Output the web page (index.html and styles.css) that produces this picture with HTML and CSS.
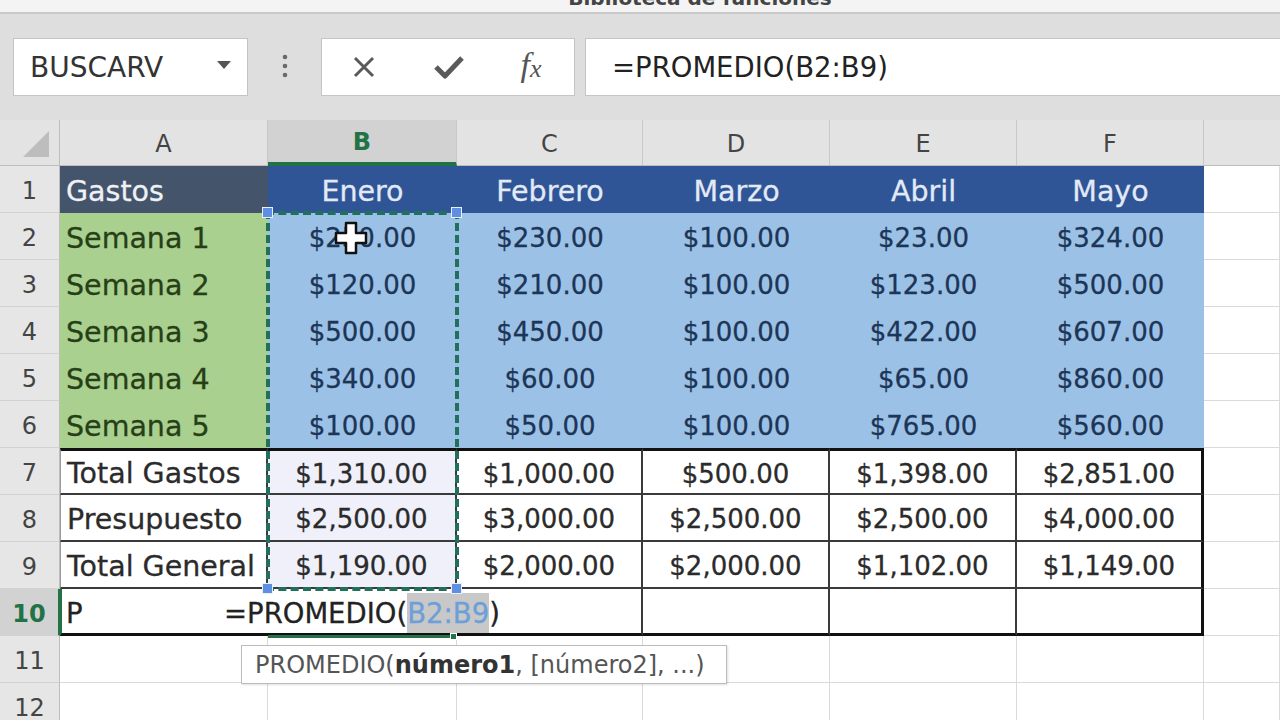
FILE: index.html
```html
<!DOCTYPE html>
<html lang="es">
<head>
<meta charset="utf-8">
<title>Biblioteca de funciones</title>
<link rel="stylesheet" href="styles.css">
</head>
<body>
<div class="window">
  <div class="titlebar"><span class="title">Biblioteca de funciones</span></div>
  <div class="formulabar">
    <div class="namebox"><span>BUSCARV</span>
      <svg class="dd" width="14" height="8" viewBox="0 0 14 8"><path d="M0 0h14L7 8z" fill="#555"/></svg>
    </div>
    <div class="grip">
      <svg width="6" height="26" viewBox="0 0 6 26"><circle cx="3" cy="3" r="2.3" fill="#6a6a6a"/><circle cx="3" cy="12" r="2.3" fill="#6a6a6a"/><circle cx="3" cy="21" r="2.3" fill="#6a6a6a"/></svg>
    </div>
    <div class="buttons">
      <span class="btn"><svg width="24" height="24" viewBox="0 0 24 24"><path d="M3 3L21 21M21 3L3 21" stroke="#5a5a5a" stroke-width="3" fill="none"/></svg></span>
      <span class="btn"><svg width="30" height="26" viewBox="0 0 30 26"><path d="M2 13L11 22L28 4" stroke="#5a5a5a" stroke-width="5" fill="none" stroke-linejoin="round"/></svg></span>
      <span class="btn fx"><i>f</i><i class="x">x</i></span>
    </div>
    <div class="formula">=PROMEDIO(B2:B9)</div>
  </div>

  <div class="sheet">
    <div class="corner"><svg width="30" height="30" viewBox="0 0 30 30"><path d="M28 2V28H2z" fill="#bdbdbd"/></svg></div>
    <div class="ch">A</div><div class="ch sel">B</div><div class="ch">C</div><div class="ch">D</div><div class="ch">E</div><div class="ch">F</div><div class="ch last"></div>

    <div class="rh">1</div>
    <div class="c l hdA">Gastos</div><div class="c hdM">Enero</div><div class="c hdM">Febrero</div><div class="c hdM">Marzo</div><div class="c hdM">Abril</div><div class="c hdM">Mayo</div><div class="c"></div>

    <div class="rh">2</div>
    <div class="c l wk">Semana 1</div><div class="c val">$250.00</div><div class="c val">$230.00</div><div class="c val">$100.00</div><div class="c val">$23.00</div><div class="c val">$324.00</div><div class="c"></div>

    <div class="rh">3</div>
    <div class="c l wk">Semana 2</div><div class="c val">$120.00</div><div class="c val">$210.00</div><div class="c val">$100.00</div><div class="c val">$123.00</div><div class="c val">$500.00</div><div class="c"></div>

    <div class="rh">4</div>
    <div class="c l wk">Semana 3</div><div class="c val">$500.00</div><div class="c val">$450.00</div><div class="c val">$100.00</div><div class="c val">$422.00</div><div class="c val">$607.00</div><div class="c"></div>

    <div class="rh">5</div>
    <div class="c l wk">Semana 4</div><div class="c val">$340.00</div><div class="c val">$60.00</div><div class="c val">$100.00</div><div class="c val">$65.00</div><div class="c val">$860.00</div><div class="c"></div>

    <div class="rh">6</div>
    <div class="c l wk">Semana 5</div><div class="c val">$100.00</div><div class="c val">$50.00</div><div class="c val">$100.00</div><div class="c val">$765.00</div><div class="c val">$560.00</div><div class="c"></div>

    <div class="rh">7</div>
    <div class="c l tot first top">Total Gastos</div><div class="c tot selb top">$1,310.00</div><div class="c tot top">$1,000.00</div><div class="c tot top">$500.00</div><div class="c tot top">$1,398.00</div><div class="c tot top end">$2,851.00</div><div class="c"></div>

    <div class="rh">8</div>
    <div class="c l tot first">Presupuesto</div><div class="c tot selb">$2,500.00</div><div class="c tot">$3,000.00</div><div class="c tot">$2,500.00</div><div class="c tot">$2,500.00</div><div class="c tot end">$4,000.00</div><div class="c"></div>

    <div class="rh">9</div>
    <div class="c l tot first">Total General</div><div class="c tot selb">$1,190.00</div><div class="c tot">$2,000.00</div><div class="c tot">$2,000.00</div><div class="c tot">$1,102.00</div><div class="c tot end">$1,149.00</div><div class="c"></div>

    <div class="rh act">10</div>
    <div class="c l tot edit"><span class="p">P</span><span class="f">=PROMEDIO(<span class="ref">B2:B9</span>)</span></div>
    <div class="c tot bottom"></div><div class="c tot bottom"></div><div class="c tot bottom end"></div><div class="c"></div>

    <div class="rh">11</div>
    <div class="c"></div><div class="c"></div><div class="c"></div><div class="c"></div><div class="c"></div><div class="c"></div><div class="c"></div>

    <div class="rh">12</div>
    <div class="c"></div><div class="c"></div><div class="c"></div><div class="c"></div><div class="c"></div><div class="c"></div><div class="c"></div>

    <div class="ants"></div>
    <div class="handle h-tl"></div><div class="handle h-tr"></div><div class="handle h-bl"></div><div class="handle h-br"></div>
    <div class="greenline"></div><div class="greensq"></div>
    <svg class="cursor" width="34" height="34" viewBox="0 0 34 34"><path d="M12 2h10v10h10v10H22v10H12V22H2V12h10z" fill="#fff" stroke="#111" stroke-width="2.5" stroke-linejoin="round"/></svg>
    <div class="tooltip">PROMEDIO(<b>número1</b>, [número2], ...)</div>
  </div>
</div>
</body>
</html>
```

FILE: styles.css
```css
html, body {
  margin: 0;
  padding: 0;
}
body {
  background: #dedede;
  font-family: "DejaVu Sans", "Liberation Sans", sans-serif;
}
.window {
  width: 1280px;
  height: 720px;
  overflow: hidden;
  display: flex;
  flex-direction: column;
}
.titlebar {
  height: 12px;
  flex: none;
  background: #f4f4f4;
  border-bottom: 2px solid #c9c9c9;
  overflow: hidden;
  text-align: center;
}
.title {
  display: block;
  font-size: 20px;
  line-height: 20px;
  margin-top: -12px;
  padding-left: 120px;
  color: #444;
  font-weight: bold;
}
.formulabar {
  height: 106px;
  flex: none;
  box-sizing: border-box;
  padding: 24px 0 0 13px;
  display: flex;
  align-items: flex-start;
  background: #dedede;
}
.namebox {
  width: 235px;
  height: 58px;
  box-sizing: border-box;
  background: #fff;
  border: 1px solid #c4c4c4;
  display: flex;
  align-items: center;
  justify-content: space-between;
  padding: 0 16px 0 16px;
  font-size: 28px;
  color: #333;
}
.namebox .dd {
  margin-top: -4px;
}
.grip {
  width: 73px;
  height: 58px;
  display: flex;
  align-items: center;
  justify-content: center;
}
.buttons {
  width: 254px;
  height: 58px;
  box-sizing: border-box;
  background: #fff;
  border: 1px solid #c4c4c4;
  display: grid;
  grid-template-columns: 84px 86px 84px;
  align-items: center;
  justify-items: center;
}
.btn {
  display: flex;
  align-items: center;
  justify-content: center;
}
.fx {
  font-family: "Liberation Serif", "DejaVu Serif", serif;
  font-size: 34px;
  color: #555;
  margin-left: -6px;
  margin-top: -4px;
}
.fx .x {
  font-size: 26px;
  margin-left: 0;
  margin-top: 8px;
}
.formula {
  margin-left: 10px;
  flex: 1;
  height: 58px;
  box-sizing: border-box;
  background: #fff;
  border: 1px solid #c4c4c4;
  border-right: none;
  padding-left: 26px;
  display: flex;
  align-items: center;
  font-size: 27.5px;
  color: #222;
}

.sheet {
  position: relative;
  flex: none;
  background: #fff;
  display: grid;
  grid-template-columns: 60px 208px 189px 186px 187px 187px 187px 76px;
  grid-template-rows: 46px repeat(12, 47px);
  color: #333;
}
.sheet > div {
  box-sizing: border-box;
}
.corner {
  background: #e3e3e3;
  border-right: 1px solid #bdbdbd;
  border-bottom: 1px solid #bdbdbd;
  display: flex;
  align-items: flex-end;
  justify-content: flex-end;
  padding: 0 8px 6px 0;
}
.ch {
  background: #e3e3e3;
  border-right: 1px solid #c8c8c8;
  border-bottom: 1px solid #bdbdbd;
  display: flex;
  align-items: center;
  justify-content: center;
  font-size: 24px;
  color: #444;
  padding-top: 2px;
}
.ch.sel {
  background: #d2d2d2;
  color: #217346;
  font-weight: bold;
  border-bottom: 4px solid #217346;
}
.ch.last {
  border-right: none;
}
.rh {
  background: #e6e6e6;
  border-right: 1px solid #bdbdbd;
  border-bottom: 1px solid #d2d2d2;
  display: flex;
  align-items: center;
  justify-content: center;
  font-size: 24px;
  color: #444;
  padding-top: 3px;
}
.rh.act {
  background: #d2d2d2;
  color: #217346;
  font-weight: bold;
  border-right: 2px solid #217346;
}
.c {
  border-right: 1px solid #dadada;
  border-bottom: 1px solid #dadada;
  display: flex;
  align-items: center;
  justify-content: center;
  font-size: 26px;
  white-space: nowrap;
  padding-top: 3px;
  -webkit-text-stroke: 0.3px currentColor;
}
.c.l {
  justify-content: flex-start;
  padding-left: 6px;
  font-size: 28.5px;
}
.hdA {
  background: #44546a;
  border: none;
  color: #eef1f6;
}
.hdM {
  background: #2f5597;
  border: none;
  color: #e2eaf6;
  font-size: 28.5px;
}
.wk {
  background: #a9d08e;
  border: none;
  color: #273f17;
}
.val {
  background: #9bc2e6;
  border: none;
  color: #1d3557;
}
.tot {
  background: #fff;
  border-right: 2px solid #3a3a3a;
  border-bottom: 2px solid #3a3a3a;
  color: #2b2b2b;
}
.tot.first {
  border-left: 1px solid #9a9a9a;
}
.tot.top {
  border-top: 3px solid #111;
}
.tot.end {
  border-right: 3px solid #111;
}
.tot.bottom {
  border-bottom: 3px solid #111;
}
.tot.selb {
  background: #eff0f9;
}
.sheet .edit {
  grid-column: span 3;
  border-left: 2px solid #217346;
  border-bottom: 3px solid #111;
  padding-left: 4px;
  font-size: 27.5px;
  color: #222;
}
.edit .p {
  width: 158px;
}
.edit .ref {
  background: #c8c8c8;
  color: #6d9fd8;
  padding: 4px 0;
}

.ants {
  position: absolute;
  left: 266px;
  top: 91px;
  width: 193px;
  height: 380px;
  box-sizing: border-box;
  border: 4px dashed #22705c;
}
.handle {
  position: absolute;
  width: 11px;
  height: 11px;
  background: #5f8fe0;
  border: 1px solid #e8f0ff;
}
.h-tl { left: 262px; top: 87px; }
.h-tr { left: 451px; top: 87px; }
.h-bl { left: 262px; top: 463px; }
.h-br { left: 451px; top: 463px; }
.greenline {
  position: absolute;
  left: 268px;
  top: 515px;
  width: 184px;
  height: 3px;
  background: #217346;
}
.greensq {
  position: absolute;
  left: 450px;
  top: 513px;
  width: 7px;
  height: 7px;
  background: #217346;
  border: 1px solid #fff;
}
.cursor {
  position: absolute;
  left: 334px;
  top: 101px;
}
.tooltip {
  position: absolute;
  left: 241px;
  top: 525px;
  width: 486px;
  height: 39px;
  box-sizing: border-box;
  background: #fff;
  border: 1px solid #bcbcbc;
  box-shadow: 1px 1px 2px rgba(0, 0, 0, 0.12);
  padding-left: 13px;
  display: flex;
  align-items: center;
  font-size: 24px;
  color: #555;
  white-space: nowrap;
}
.tooltip b {
  color: #333;
}
```
